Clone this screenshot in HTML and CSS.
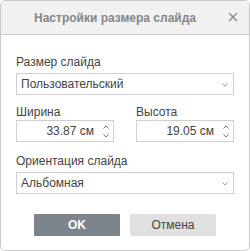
FILE: index.html
```html
<!DOCTYPE html>
<html lang="ru">
<head>
    <meta charset="UTF-8">
    <title>Настройки размера слайда</title>
    <link rel="stylesheet" href="styles.css">
</head>
<body>
    <div class="dialog">
        <div class="header">
            <span class="title">Настройки размера слайда</span>
            <span class="close">
                <svg width="10" height="10" viewBox="0 0 10 10"><path d="M1 1L9 9M9 1L1 9" stroke="#8a8a8a" stroke-width="1.4" fill="none"/></svg>
            </span>
        </div>
        <div class="content">
            <div class="label">Размер слайда</div>
            <div class="select">
                <span>Пользовательский</span>
                <svg class="caret" width="6" height="4" viewBox="0 0 6 4"><path d="M0.5 0.5L3 3L5.5 0.5" stroke="#999" stroke-width="0.9" fill="none"/></svg>
            </div>

            <div class="row">
                <div class="col">
                    <div class="label tight">Ширина</div>
                    <div class="spin">
                        <span class="value">33.87 см</span>
                        <span class="arrows">
                            <svg width="6" height="4" viewBox="0 0 6 4"><path d="M0.5 3.5L3 1L5.5 3.5" stroke="#777" fill="none"/></svg>
                            <svg width="6" height="4" viewBox="0 0 6 4"><path d="M0.5 0.5L3 3L5.5 0.5" stroke="#777" fill="none"/></svg>
                        </span>
                    </div>
                </div>
                <div class="col">
                    <div class="label tight">Высота</div>
                    <div class="spin">
                        <span class="value">19.05 см</span>
                        <span class="arrows">
                            <svg width="6" height="4" viewBox="0 0 6 4"><path d="M0.5 3.5L3 1L5.5 3.5" stroke="#777" fill="none"/></svg>
                            <svg width="6" height="4" viewBox="0 0 6 4"><path d="M0.5 0.5L3 3L5.5 0.5" stroke="#777" fill="none"/></svg>
                        </span>
                    </div>
                </div>
            </div>

            <div class="label">Ориентация слайда</div>
            <div class="select">
                <span>Альбомная</span>
                <svg class="caret" width="6" height="4" viewBox="0 0 6 4"><path d="M0.5 0.5L3 3L5.5 0.5" stroke="#999" stroke-width="0.9" fill="none"/></svg>
            </div>

            <div class="buttons">
                <button class="btn primary">OK</button>
                <button class="btn">Отмена</button>
            </div>
        </div>
    </div>
</body>
</html>
```

FILE: styles.css
```css
body {
    margin: 0;
    padding: 0;
    font-family: "Liberation Sans", Arial, sans-serif;
    font-size: 12px;
    color: #444;
    background: #fff;
}
.dialog {
    width: 250px;
    height: 251px;
    box-sizing: border-box;
    border: 1px solid #cbcbcb;
    border-radius: 5px;
    overflow: hidden;
}
.header {
    position: relative;
    height: 33px;
    background-color: #f1f1f1;
    border-bottom: 1px solid #cbcbcb;
    display: flex;
    align-items: center;
    justify-content: center;
    padding-right: 20px;
}
.title {
    font-size: 12px;
    font-weight: bold;
    color: #868686;
}
.close {
    position: absolute;
    right: 11px;
    top: 11px;
    width: 10px;
    height: 10px;
    display: flex;
}
.content {
    padding: 20px 15px 0 15px;
}
.label {
    height: 14px;
    line-height: 14px;
    margin-bottom: 4px;
}
.label.tight {
    margin-bottom: 1px;
}
.select {
    height: 22px;
    box-sizing: border-box;
    border: 1px solid #cfcfcf;
    display: flex;
    align-items: center;
    justify-content: space-between;
    padding: 0 5px 0 4px;
}
.caret {
    margin-top: 2px;
}
.row {
    display: flex;
    gap: 22px;
    margin: 10px 0 12px 0;
}
.col {
    width: 98px;
}
.spin {
    height: 22px;
    box-sizing: border-box;
    border: 1px solid #cfcfcf;
    display: flex;
    align-items: center;
    justify-content: flex-end;
    padding-right: 4px;
}
.value {
    margin-right: 9px;
}
.arrows {
    display: flex;
    flex-direction: column;
    gap: 5px;
}
.arrows svg {
    display: block;
}
.buttons {
    display: flex;
    justify-content: center;
    gap: 10px;
    margin-top: 20px;
}
.btn {
    width: 86px;
    height: 22px;
    border: none;
    border-radius: 1px;
    font-family: "Liberation Sans", Arial, sans-serif;
    font-size: 12px;
    color: #444;
    background-color: #e0e0e0;
    padding: 0;
}
.btn.primary {
    background-color: #7d858c;
    color: #fff;
    font-weight: bold;
}
```
